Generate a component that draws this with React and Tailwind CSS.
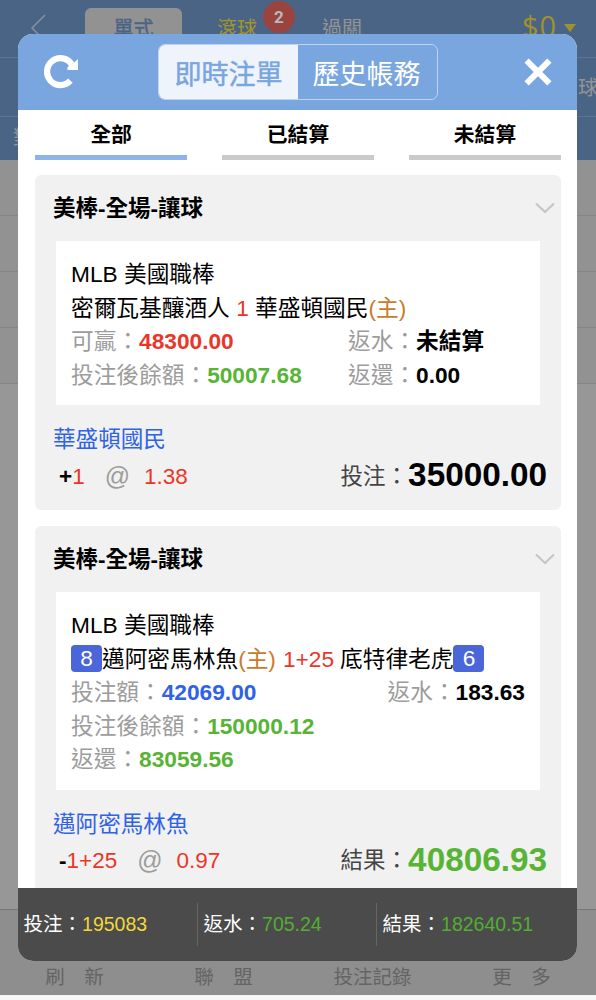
import React, { useState } from 'react';

const filters = ['全部', '已結算', '未結算'];

const bottomNav = ['刷\u3000新', '聯\u3000盟', '投注記錄', '更\u3000多'];

const totals = [
  { label: '投注', value: '195083', width: 'w-[180px]', color: 'text-[#f0d83a]' },
  { label: '返水', value: '705.24', width: 'w-[179px]', color: 'text-[#53ae33]' },
  { label: '結果', value: '182640.51', width: 'w-[200px]', color: 'text-[#53ae33]' },
];

const RefreshIcon = () => (
  <svg width="36" height="36" viewBox="0 0 36 36" fill="none">
    <path d="M26.4 26.6 A13.4 13.4 0 1 1 27.6 10.2" stroke="white" strokeWidth="6.2" />
    <path d="M34 5 V16 H23.4 V13.6 L26 10.5 L29 9.6 Z" fill="white" />
  </svg>
);

const CloseIcon = () => (
  <svg width="28" height="28" viewBox="0 0 28 28" fill="none">
    <path d="M2.6 2.6 L25.4 25.4 M25.4 2.6 L2.6 25.4" stroke="white" strokeWidth="6" />
  </svg>
);

const ChevronIcon = () => (
  <svg width="20" height="12" viewBox="0 0 20 12" fill="none">
    <path d="M1 1.5 L10 10 L19 1.5" stroke="#c6c6c6" strokeWidth="2.2" />
  </svg>
);

const Rank = ({ children }) => (
  <span className="-mt-0.5 inline-flex h-[27px] w-[31px] items-center justify-center rounded bg-[#4a66d8] text-white">{children}</span>
);

const Field = ({ label, value, color = 'text-black' }) => (
  <div className="whitespace-nowrap">
    <span className="text-[#9c9c9c]">{label}：</span>
    <span className={`font-bold ${color}`}>{value}</span>
  </div>
);

const BetCard = ({ title, children, pick, sign, handicap, odds, resultLabel, result, resultColor }) => (
  <div className="h-[335px] shrink-0 rounded-md bg-[#f1f1f1] text-[22.5px] leading-[33.5px] text-black last:h-[371px]">
    <div className="flex h-[66px] items-center justify-between pr-1.5 pl-[18px]">
      <h2 className="pt-px font-bold">{title}</h2>
      <ChevronIcon />
    </div>
    <div className="mx-[21px] bg-white pt-[17px] pr-[15px] pb-[13px] pl-[15px] text-[22.7px]">{children}</div>
    <div className="pt-[18px] pl-[18px] text-[22.6px] text-[#2f62e8]">{pick}</div>
    <div className="mt-px flex h-[38px] items-center justify-between pr-3.5 pl-6">
      <div className="flex items-center">
        <span className="font-bold">{sign}</span>
        <span className="text-[#ea3628]">{handicap}</span>
        <span className="ml-5 text-[25px] text-[#9c9c9c]">@</span>
        <span className="ml-3.5 text-[#ea3628]">{odds}</span>
      </div>
      <div className="flex items-center">
        <span className="text-[#444]">{resultLabel}：</span>
        <span className={`-mt-[3px] text-[33.3px] font-bold ${resultColor}`}>{result}</span>
      </div>
    </div>
  </div>
);

const Backdrop = () => (
  <div className="flex h-full flex-col bg-[#979797]">
    <div className="flex h-[57px] items-start bg-[#4a6485] pt-2 text-[20px] leading-10 text-[#949494]">
      <svg className="mt-1.5 ml-[31px]" width="15" height="28" viewBox="0 0 15 28" fill="none">
        <path d="M14 1 L1 14 L14 27" stroke="#8792a0" strokeWidth="1.5" />
      </svg>
      <div className="ml-[39px] h-10 w-[97px] rounded-t-md bg-[#929292] text-center leading-[42px] text-[#4a6485] [-webkit-text-stroke:0.4px]">單式</div>
      <div className="relative ml-[35px] leading-[42px] text-[#a49528]">
        滾球
        <span className="absolute -top-[7px] left-[46px] flex h-8 w-8 items-center justify-center rounded-full bg-[#9a4440] font-[Roboto] text-[17px] font-bold text-[#b8b8b8]">2</span>
      </div>
      <div className="ml-[65px] leading-[42px]">過關</div>
      <div className="ml-[160px] w-[36px] font-['Open_Sans'] text-[29px] leading-[36px] tracking-[1px] text-[#a1912c]">$0</div>
      <svg className="mt-4 ml-[6px]" width="12" height="8" viewBox="0 0 12 8">
        <path d="M0 0 H12 L6 8 Z" fill="#a1912c" />
      </svg>
    </div>
    <div className="h-[60px] border-y border-[#5f7590] bg-[#4a6485] text-right text-[20px] leading-[60px] text-[#949494]">
      <span className="-mr-0.5">球</span>
    </div>
    <div className="h-[43px] bg-[#4a6485] pl-[13px] text-[20px] leading-[43px] text-[#949494]">對</div>
    {[0, 1, 2, 3].map((row) => (
      <div key={row} className="h-14 border-b border-[#858585] bg-[#929292]" />
    ))}
    <div className="grow" />
    <div className="flex h-[86px] items-end border-t border-[#777] bg-[#8e8e8e] text-[19.5px] text-[#646464]">
      {bottomNav.map((item) => (
        <div key={item} className="w-1/4 text-center leading-9">{item}</div>
      ))}
    </div>
    <div className="h-[5px] shrink-0 bg-[#f7f7f7]" />
  </div>
);

const App = () => {
  const [tab, setTab] = useState('全部');

  return (
    <div className="relative h-[1000px] w-[596px] overflow-hidden font-['Liberation_Sans','Noto_Sans_CJK_TC',sans-serif]">
      <Backdrop />

      {/* Bet record dialog */}
      <div className="absolute top-[34px] left-[18px] flex h-[927px] w-[559px] flex-col overflow-hidden rounded-[15px] bg-white">
        <div className="flex h-[76px] shrink-0 items-center bg-[#7aa6df] pr-[25px] pl-[26px]">
          <button><RefreshIcon /></button>
          <div className="mr-auto ml-[78px] flex h-14 w-[280px] overflow-hidden rounded-[7px] border border-[#bdd3f0] text-[27px] leading-[60px]">
            <button className="w-[139px] bg-[#eff4fc] text-[#7aa6df] [-webkit-text-stroke:0.5px]">即時注單</button>
            <button className="grow pr-0.5 text-white">歷史帳務</button>
          </div>
          <button><CloseIcon /></button>
        </div>

        <div className="flex shrink-0 justify-between px-[17px] pr-4 text-[20.8px] font-bold text-black">
          {filters.map((name) => (
            <button
              key={name}
              onClick={() => setTab(name)}
              className={`h-[50px] w-[152px] border-b-[5px] leading-[49px] ${tab === name ? 'border-[#8eb3ea]' : 'border-[#cacaca]'}`}
            >
              {name}
            </button>
          ))}
        </div>

        <div className="flex grow flex-col gap-4 overflow-hidden px-[17px] pt-[15px] pr-4">
          <BetCard
            title="美棒-全場-讓球"
            pick="華盛頓國民"
            sign="+"
            handicap="1"
            odds="1.38"
            resultLabel="投注"
            result="35000.00"
            resultColor="text-black"
          >
            <div>MLB 美國職棒</div>
            <div>
              密爾瓦基釀酒人 <span className="text-[#ea3628]">1</span> 華盛頓國民<span className="text-[#c67c2d]">(主)</span>
            </div>
            <div className="grid grid-cols-[277px_1fr]">
              <Field label="可贏" value="48300.00" color="text-[#ea3628]" />
              <Field label="返水" value="未結算" />
              <Field label="投注後餘額" value="50007.68" color="text-[#57b435]" />
              <Field label="返還" value="0.00" />
            </div>
          </BetCard>

          <BetCard
            title="美棒-全場-讓球"
            pick="邁阿密馬林魚"
            sign="-"
            handicap="1+25"
            odds="0.97"
            resultLabel="結果"
            result="40806.93"
            resultColor="text-[#57b435]"
          >
            <div>MLB 美國職棒</div>
            <div className="flex h-[33.5px] items-center whitespace-pre">
              <Rank>8</Rank>
              <span>邁阿密馬林魚</span>
              <span className="text-[#c67c2d]">(主)</span>
              <span className="ml-[7px] text-[#ea3628]">1+25</span>
              <span className="ml-1.5">底特律老虎</span>
              <Rank>6</Rank>
            </div>
            <div className="flex justify-between">
              <Field label="投注額" value="42069.00" color="text-[#2f62e8]" />
              <Field label="返水" value="183.63" />
            </div>
            <Field label="投注後餘額" value="150000.12" color="text-[#57b435]" />
            <Field label="返還" value="83059.56" color="text-[#57b435]" />
          </BetCard>
        </div>

        <div className="flex h-[73px] shrink-0 items-center divide-x divide-[#666] bg-[#4b4b4b] text-[19.5px]">
          {totals.map(({ label, value, width, color }) => (
            <div key={label} className={`h-[43px] shrink-0 pl-[5.5px] leading-[43px] ${width}`}>
              <span className="text-white">{label}：</span>
              <span className={color}>{value}</span>
            </div>
          ))}
        </div>
      </div>
    </div>
  );
};

export default App;
